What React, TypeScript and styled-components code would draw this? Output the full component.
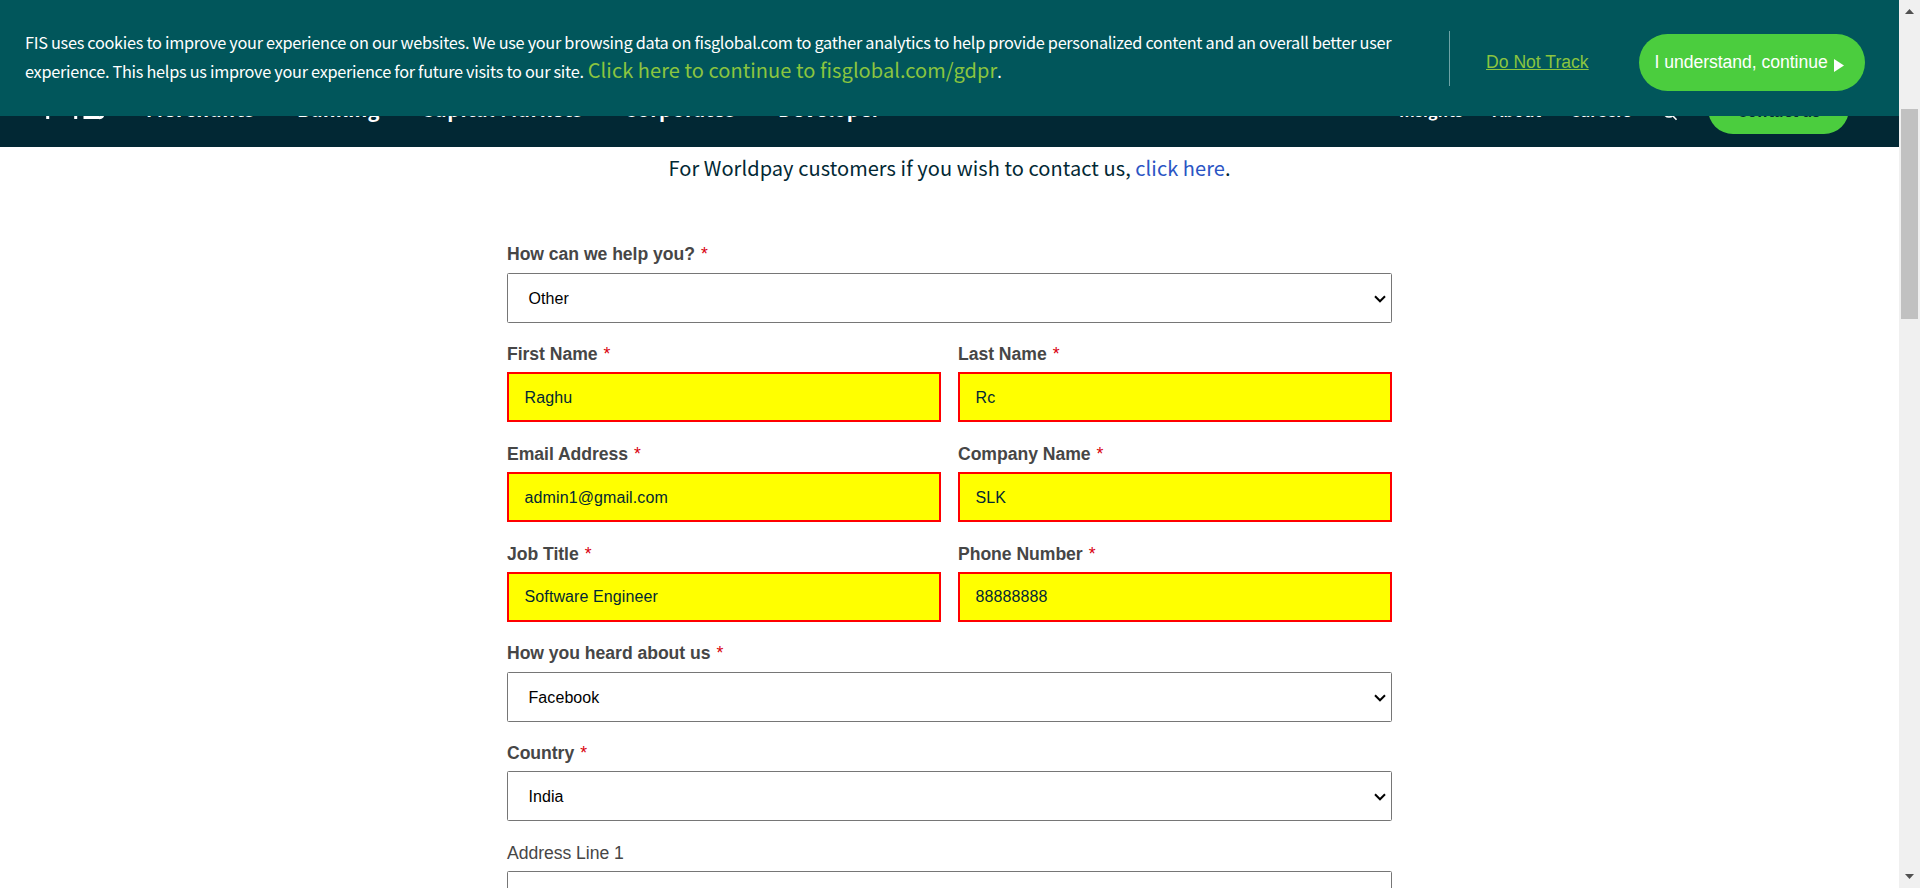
import React from "react";
import styled, { createGlobalStyle } from "styled-components";

const sourceFont = `"Noto Sans CJK JP", "Noto Sans", sans-serif`;
const arial = `"Liberation Sans", Arial, sans-serif`;

const GlobalStyle = createGlobalStyle`
  * { box-sizing: border-box; }
  body { margin: 0; background: #fff; font-family: ${arial}; overflow: hidden; }
`;

const Window = styled.div`
  display: flex;
  width: 1920px;
  height: 888px;
  overflow: hidden;
`;

const Page = styled.div`
  display: flex;
  flex-direction: column;
  width: 1899px;
  height: 888px;
  overflow: hidden;
`;

const Banner = styled.section`
  position: relative;
  z-index: 1;
  display: flex;
  flex: none;
  height: 116px;
  padding-left: 25px;
  background: #01565b;
`;

const CookieText = styled.p`
  width: 1424px;
  margin: 0;
  padding-top: 28px;
  font: 400 16.3px/29px ${sourceFont};
  letter-spacing: -0.286px;
  color: #fff;
  white-space: nowrap;
`;

const CookieLine = styled.span`
  display: block;
  height: 29px;
`;

const GdprLink = styled.a`
  margin-left: 0.8px;
  font-size: 20px;
  line-height: 0;
  letter-spacing: 0.06px;
  color: #8bc53f;
`;

const Divider = styled.div`
  width: 1px;
  height: 55px;
  margin-top: 31px;
  background: #6fa3a6;
`;

const NoTrack = styled.a`
  width: 153px;
  margin: 51px 0 0 36px;
  font-size: 17.6px;
  line-height: 22px;
  color: #8bc53f;
  text-decoration: underline;
  white-space: nowrap;
`;

const Accept = styled.button`
  display: flex;
  align-items: center;
  width: 226px;
  height: 57px;
  margin-top: 34px;
  padding: 0 0 0 15.5px;
  border: 0;
  border-radius: 29px;
  background: #4bcd3e;
  color: #fff;
  font: 400 17.6px ${arial};
  letter-spacing: -0.04px;
  white-space: nowrap;
`;

const PlayIcon = styled.svg`
  margin: 5px 0 0 6px;
`;

const Header = styled.header`
  display: flex;
  align-items: flex-start;
  flex: none;
  height: 62px;
  margin-top: -31px;
  padding-left: 45px;
  background: #022834;
`;

const Logo = styled.svg`
  flex: none;
  width: 101px;
  height: 36px;
`;

const NavLink = styled.a<{ $w: number; $small?: boolean; $spacing?: number }>`
  flex: none;
  width: ${(p) => p.$w}px;
  margin-top: ${(p) => (p.$small ? 11 : 10)}px;
  font: 700 ${(p) => (p.$small ? 16 : 20)}px/28px ${sourceFont};
  letter-spacing: ${(p) => p.$spacing ?? 0.2}px;
  color: #fff;
  white-space: nowrap;
`;

const SearchIcon = styled.svg`
  flex: none;
  width: 46px;
  height: 16px;
  margin-top: 20px;
`;

const ContactPill = styled.a`
  display: flex;
  justify-content: center;
  flex: none;
  width: 141px;
  height: 50px;
  margin-top: -1px;
  padding-top: 14px;
  border-radius: 25px;
  background: #4bcd3e;
  color: #022834;
  font: 700 16px/24px ${sourceFont};
`;

const Notice = styled.p`
  height: 42px;
  margin: 0;
  font: 400 20px/42px ${sourceFont};
  letter-spacing: 0.07px;
  color: #022834;
  text-align: center;
  white-space: nowrap;
`;

const NoticeLink = styled.a`
  color: #2b55c4;
`;

const Form = styled.form`
  display: flex;
  flex-direction: column;
  width: 885px;
  margin: 52.6px auto 0 507px;
`;

const Row = styled.div`
  display: flex;
  gap: 17px;
  flex: none;
  height: 99.75px;
`;

const Field = styled.div`
  display: flex;
  flex-direction: column;
  flex: 1;
`;

const Label = styled.label<{ $plain?: boolean }>`
  height: 31px;
  padding-top: 0.8px;
  font-size: 17.6px;
  font-weight: ${(p) => (p.$plain ? 400 : 700)};
  line-height: 25px;
  letter-spacing: -0.04px;
  color: #464646;
  white-space: nowrap;
`;

const Star = styled.span`
  margin-left: 6px;
  font-weight: 400;
  color: #d9000d;
`;

const TextBox = styled.div`
  height: 50px;
  padding: 0.6px 15.6px 0;
  border: 2px solid #f00;
  background: #ff0;
  color: #022834;
  font-size: 16px;
  line-height: 46px;
  letter-spacing: 0.1px;
`;

const SelectBox = styled.div`
  display: flex;
  align-items: center;
  justify-content: space-between;
  height: 50px;
  padding: 2px 5px 0 20.5px;
  border: 1px solid #767676;
  border-radius: 1.5px;
  font-size: 16px;
  letter-spacing: 0.08px;
  color: #000;
`;

const Scrollbar = styled.aside`
  display: flex;
  flex-direction: column;
  justify-content: space-between;
  align-items: center;
  width: 21px;
  height: 888px;
  padding: 9px 0;
  background: #f0f0f0;
`;

const Thumb = styled.div`
  width: 17px;
  height: 210px;
  margin: 95px 0 auto;
  background: #c1c1c1;
`;

const ScrollArrow = styled.svg`
  flex: none;
  display: block;
`;

function TextField({ label, value }: { label: string; value: string }) {
  return (
    <Field>
      <Label>{label}<Star>*</Star></Label>
      <TextBox>{value}</TextBox>
    </Field>
  );
}

function SelectField({ label, value }: { label: string; value: string }) {
  return (
    <Row>
      <Field>
        <Label>{label}<Star>*</Star></Label>
        <SelectBox>
          {value}
          <svg width="12" height="8" viewBox="0 0 12 8" fill="none" stroke="#000" strokeWidth="2">
            <path d="M1 1.3 6 6.3 11 1.3" />
          </svg>
        </SelectBox>
      </Field>
    </Row>
  );
}

const primary: [string, number, number][] = [
  ["Merchants", 151, 0.65],
  ["Banking", 124, 0.2],
  ["Capital Markets", 203, 0.6],
  ["Corporates", 154, 0.25],
  ["Developer", 621, 0.2],
];

const secondary: [string, number][] = [
  ["Insights", 94],
  ["About", 77],
  ["Careers", 92],
];

export default function App() {
  return (
    <>
      <GlobalStyle />
      <Window>
        <Page>
          <Banner>
            <CookieText>
              <CookieLine>
                FIS uses cookies to improve your experience on our websites. We use your browsing data on fisglobal.com to gather analytics to help provide personalized content and an overall better user
              </CookieLine>
              <CookieLine>
                experience. This helps us improve your experience for future visits to our site.{" "}
                <GdprLink>Click here to continue to fisglobal.com/gdpr</GdprLink>.
              </CookieLine>
            </CookieText>
            <Divider />
            <NoTrack>Do Not Track</NoTrack>
            <Accept>
              I understand, continue
              <PlayIcon width="10" height="13" viewBox="0 0 10 13">
                <path d="M0 0 10 6.5 0 13Z" fill="#fff" />
              </PlayIcon>
            </Accept>
          </Banner>
          <Header>
            <Logo viewBox="0 0 101 36" fill="none" stroke="#fff" strokeWidth="3">
              <path d="M2.7 34V13H19M2.7 23H17M30.7 34V12M58 13H43Q39 13 39 18T43 23H54Q58 23 58 28T54 32.6H38.5" />
            </Logo>
            {primary.map(([text, w, spacing]) => (
              <NavLink key={text} $w={w} $spacing={spacing}>{text}</NavLink>
            ))}
            {secondary.map(([text, w]) => (
              <NavLink key={text} $w={w} $small>{text}</NavLink>
            ))}
            <SearchIcon viewBox="0 0 46 16" fill="none" stroke="#fff" strokeWidth="1.6">
              <circle cx="7" cy="6.5" r="5.5" />
              <path d="m10.5 10.5 4 4.3" />
            </SearchIcon>
            <ContactPill>Contact us</ContactPill>
          </Header>
          <Notice>
            For Worldpay customers if you wish to contact us, <NoticeLink>click here</NoticeLink>.
          </Notice>
          <Form>
            <SelectField label="How can we help you?" value="Other" />
            <Row>
              <TextField label="First Name" value="Raghu" />
              <TextField label="Last Name" value="Rc" />
            </Row>
            <Row>
              <TextField label="Email Address" value="admin1@gmail.com" />
              <TextField label="Company Name" value="SLK" />
            </Row>
            <Row>
              <TextField label="Job Title" value="Software Engineer" />
              <TextField label="Phone Number" value="88888888" />
            </Row>
            <SelectField label="How you heard about us" value="Facebook" />
            <SelectField label="Country" value="India" />
            <Row>
              <Field>
                <Label $plain>Address Line 1</Label>
                <SelectBox />
              </Field>
            </Row>
          </Form>
        </Page>
        <Scrollbar>
          <ScrollArrow width="9" height="5" viewBox="0 0 9 5"><path d="M4.5 0 9 5H0Z" fill="#505050" /></ScrollArrow>
          <Thumb />
          <ScrollArrow width="9" height="5" viewBox="0 0 9 5"><path d="M0 0H9L4.5 5Z" fill="#505050" /></ScrollArrow>
        </Scrollbar>
      </Window>
    </>
  );
}
